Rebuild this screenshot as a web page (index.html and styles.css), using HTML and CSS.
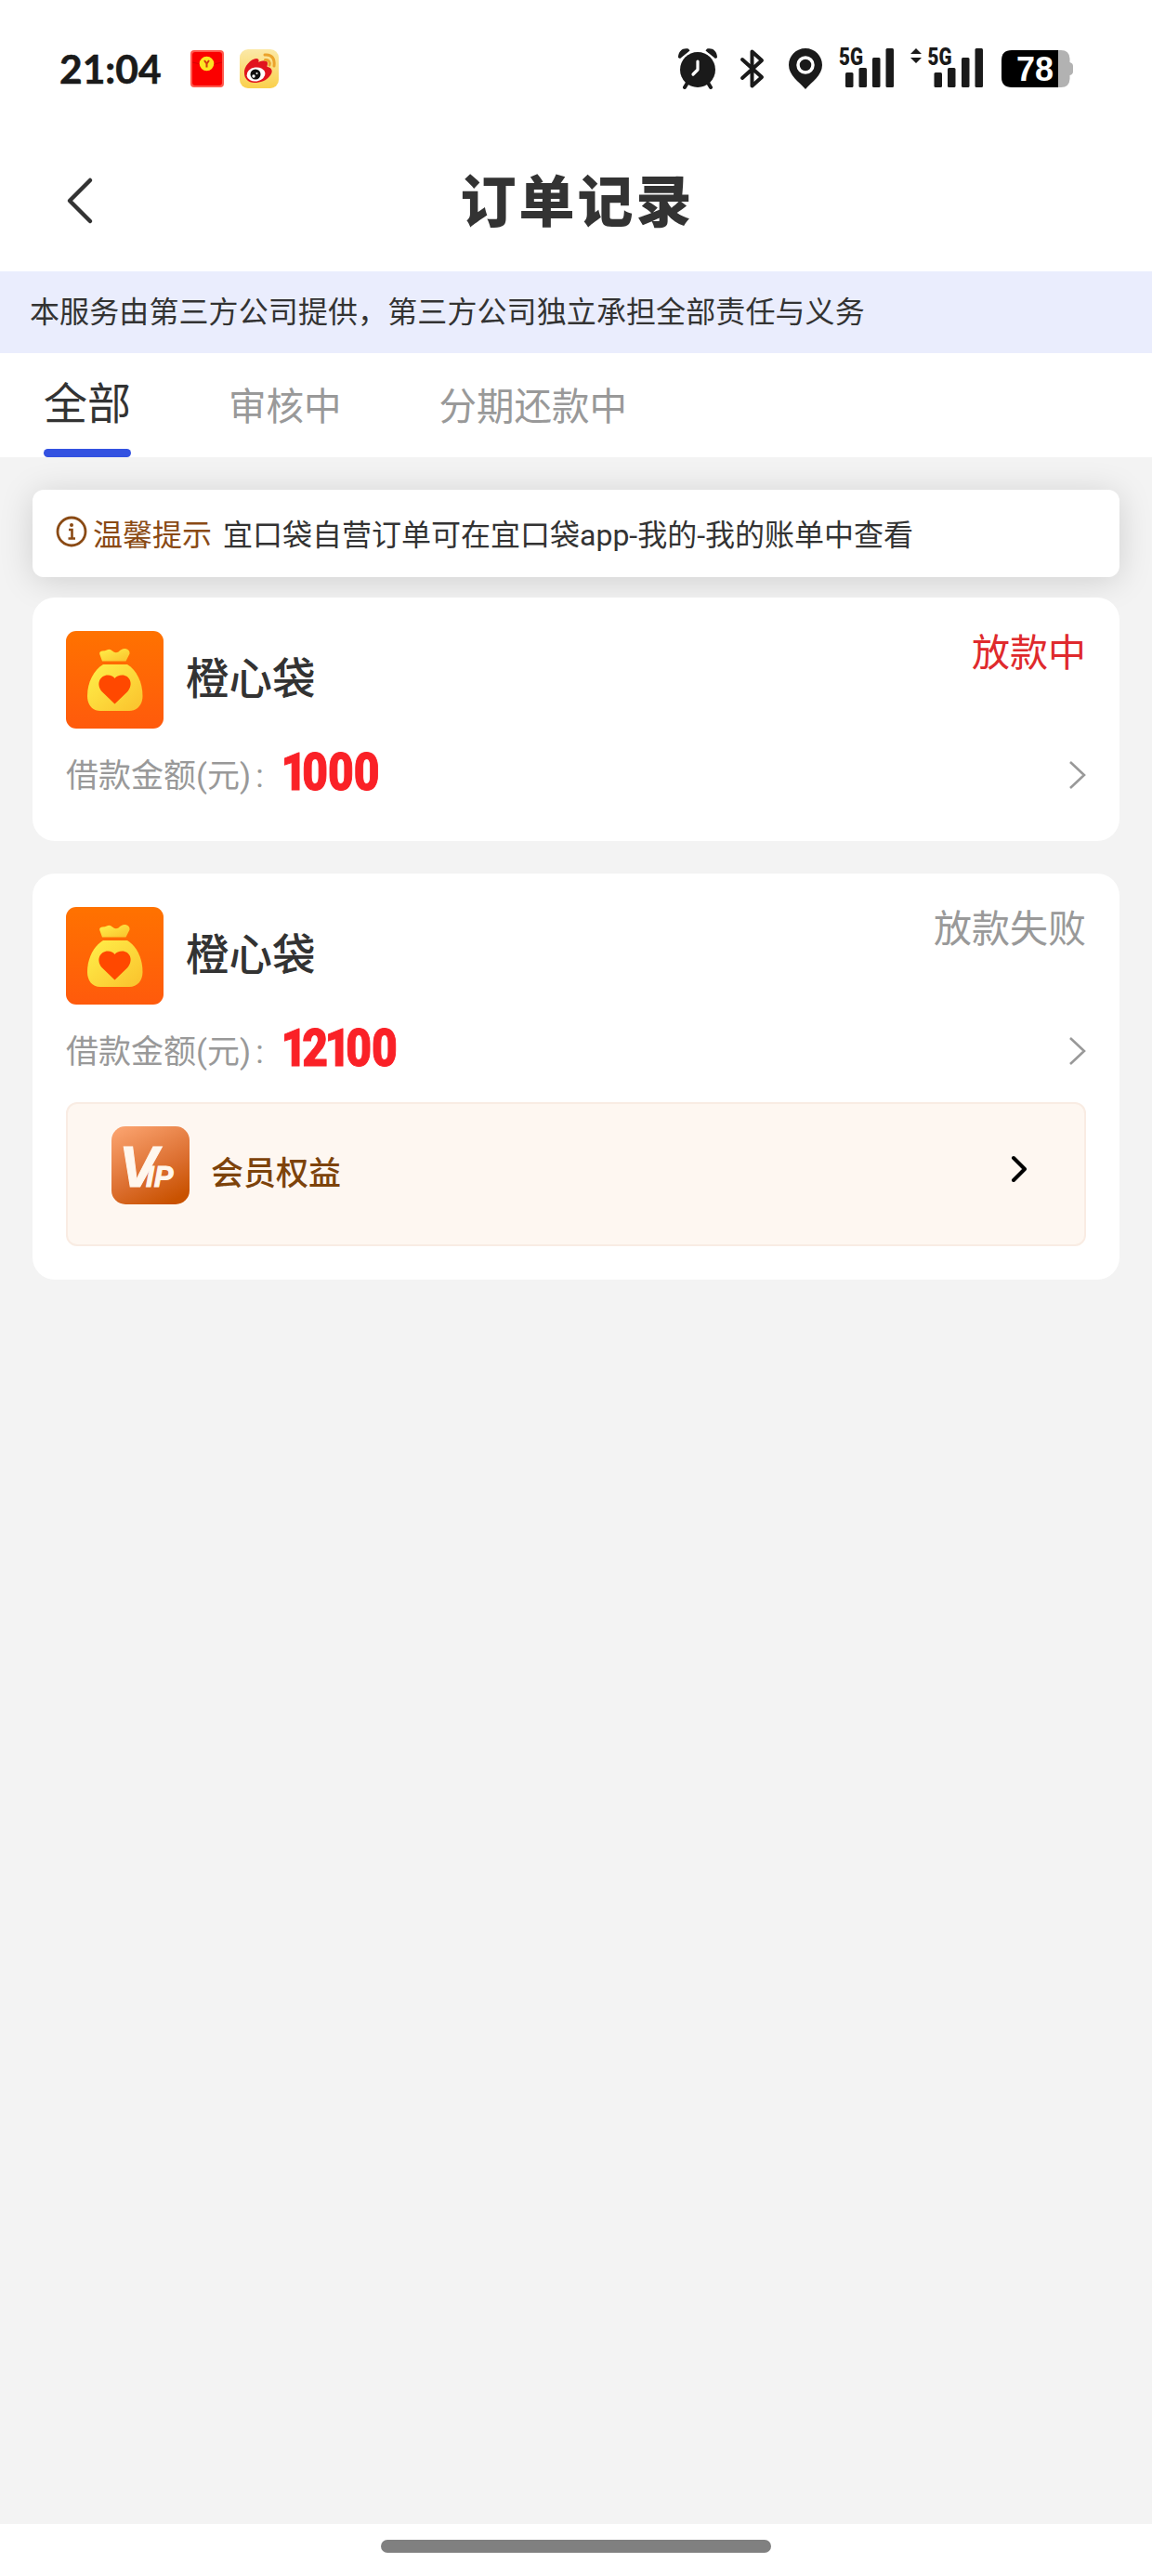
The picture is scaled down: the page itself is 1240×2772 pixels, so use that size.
FILE: index.html
```html
<!DOCTYPE html>
<html lang="zh-CN">
<head>
    <meta charset="UTF-8">
    <meta name="viewport" content="width=device-width, initial-scale=1.0">
    <title>订单记录</title>
    <link rel="stylesheet" href="styles.css">
</head>
<body>
    <!-- 公用图形 -->
    <svg width="0" height="0" class="defs">
        <defs>
            <linearGradient id="bag-bg" x1="0" y1="0" x2="0" y2="1">
                <stop offset="0" stop-color="#ff7200"/>
                <stop offset="1" stop-color="#ff5a0c"/>
            </linearGradient>
            <linearGradient id="bag-body" x1="0" y1="0" x2="1" y2="1">
                <stop offset="0" stop-color="#fff04a"/>
                <stop offset="1" stop-color="#fac12c"/>
            </linearGradient>
            <linearGradient id="vip-bg" x1="0.2" y1="0" x2="0.7" y2="1">
                <stop offset="0" stop-color="#f9a06b"/>
                <stop offset="0.6" stop-color="#dc6f30"/>
                <stop offset="1" stop-color="#c95200"/>
            </linearGradient>
            <linearGradient id="weibo-bg" x1="0" y1="0" x2="0" y2="1">
                <stop offset="0" stop-color="#fbe9a8"/>
                <stop offset="1" stop-color="#fad04c"/>
            </linearGradient>
        </defs>
        <symbol id="bag" viewBox="0 0 105 105">
            <rect width="105" height="105" rx="11" fill="url(#bag-bg)"/>
            <path d="M39 32.500 L36.300 25 Q35.500 22 39 21.500 Q42 21.500 44.500 20.200 Q47.500 18.800 50 21.500 Q53 24.500 56.500 22.500 Q60 18.500 64 19 Q69 20 68.500 24.500 L64.500 32.500 Z" fill="url(#bag-body)"/>
            <path d="M40 36 H66 C76 42 82.500 55 82.500 70 C82.500 79 77 86 68 86 H37 C28 86 23 79 23 70 C23 55 30 42 40 36 Z" fill="url(#bag-body)"/>
            <path d="M52.500 78.500 L39 65.500 C31.500 57 37 47.500 45 47.500 C48.500 47.500 51 49 52.500 51 C54 49 57 47.500 60.500 47.500 C68.500 47.500 73.500 57 66 65.500 Z" fill="#ff4800"/>
        </symbol>
    </svg>

    <div class="status-bar">
        <span class="clock">21:04</span>
        <svg class="app-icon" width="36" height="42" viewBox="0 0 36 42">
            <rect width="36" height="40" y="1" rx="4" fill="#ff5a4e"/>
            <rect x="2" y="3" width="32" height="36" rx="3" fill="#fb0000"/>
            <path d="M2 14 Q18 19 34 14" fill="none" stroke="#d90000"/>
            <circle cx="17.500" cy="15.500" r="7.800" fill="#fde622"/>
            <path d="M15 12 L17.500 15.500 L20 12 M17.500 15.500 V19.500" fill="none" stroke="#d23a10" stroke-width="2"/>
        </svg>
        <svg class="app-icon" width="42" height="42" viewBox="0 0 42 42">
            <rect width="42" height="42" rx="9" fill="url(#weibo-bg)"/>
            <path d="M5 26 C4 19 12 10 18 10 C21 10 21 13 20 14 C24 12 30 11 30 15 C30 18 29 18 30 19 C35 20 36 24 33 28 C29 34 22 36 16 36 C9 36 5 31 5 26 Z" fill="#e1131e"/>
            <ellipse cx="17.500" cy="27" rx="10" ry="7.500" fill="#fff" transform="rotate(-8 17.500 27)"/>
            <circle cx="17" cy="27" r="5.500" fill="#111"/>
            <circle cx="15" cy="29" r="1.700" fill="#fff"/>
            <circle cx="18.500" cy="26" r="1" fill="#fff"/>
            <path d="M27 6 C35 5 38 11 37 18 M27.500 11.500 C31 11 33 14 32 17" fill="none" stroke="#eba32c" stroke-width="3" stroke-linecap="round"/>
        </svg>

        <div class="system-icons">
            <svg width="44" height="46" viewBox="0 0 44 46">
                <g fill="#1a1a1a">
                    <circle cx="22" cy="24" r="19"/>
                    <path d="M1 11 C1 3 7 0 12 1.500 L13.500 3.500 L3 12 Z M43 11 C43 3 37 0 32 1.500 L30.500 3.500 L41 12 Z"/>
                </g>
                <path d="M11 38 L8 43 M33 38 L36 43" stroke="#1a1a1a" stroke-width="4" stroke-linecap="round"/>
                <path d="M22 15 V24 L17 29" fill="none" stroke="#fff" stroke-width="3.200" stroke-linecap="round" stroke-linejoin="round"/>
            </svg>
            <svg class="bluetooth" width="26" height="46" viewBox="0 0 26 46">
                <path d="M2 13 L23 32 L12.500 41.500 V4.500 L23 14 L2 33" fill="none" stroke="#1a1a1a" stroke-width="4" stroke-linecap="round" stroke-linejoin="round"/>
            </svg>
            <svg class="pin" width="38" height="46" viewBox="0 0 38 46">
                <path d="M19 1 C29 1 37 9 37 19 C37 30 26 37 19 45 C12 37 1 30 1 19 C1 9 9 1 19 1 Z" fill="#1a1a1a"/>
                <circle cx="19" cy="19" r="8" fill="none" stroke="#fff" stroke-width="3.500"/>
            </svg>
            <svg class="signal" width="60" height="46" viewBox="0 0 60 46">
                <text x="0" y="18.500" textLength="26" lengthAdjust="spacingAndGlyphs" class="net">5G</text>
                <g fill="#1a1a1a">
                    <rect x="7" y="27" width="8.500" height="16" rx="1.500"/>
                    <rect x="21.500" y="22" width="8.500" height="21" rx="1.500"/>
                    <rect x="36" y="11" width="8.500" height="32" rx="1.500"/>
                    <rect x="50.500" y="1" width="8.500" height="42" rx="1.500"/>
                </g>
            </svg>
            <svg class="signal-two" width="79" height="46" viewBox="0 0 79 46">
                <path d="M0 7 L6 1 L12 7 Z M0 11 H12 L6 17 Z" fill="#1a1a1a"/>
                <text x="18.500" y="18.500" textLength="26" lengthAdjust="spacingAndGlyphs" class="net">5G</text>
                <g fill="#1a1a1a">
                    <rect x="25.500" y="27" width="8.500" height="16" rx="1.500"/>
                    <rect x="40" y="22" width="8.500" height="21" rx="1.500"/>
                    <rect x="55" y="11" width="8.500" height="32" rx="1.500"/>
                    <rect x="69.500" y="1" width="8.500" height="42" rx="1.500"/>
                </g>
            </svg>
            <svg class="battery" width="78" height="46" viewBox="0 0 78 46">
                <path d="M61 3 H64 Q73 3 73.500 12 V16 Q77 17 77 20 V26 Q77 29 73.500 30 V34 Q73 43 64 43 H61 Z" fill="#b2b2b2"/>
                <path d="M61 3 H11 Q0 3 0 14 V32 Q0 43 11 43 H61 Z" fill="#000"/>
                <text x="16" y="36" textLength="40" lengthAdjust="spacingAndGlyphs" class="level">78</text>
            </svg>
        </div>
    </div>

    <div class="header">
        <svg class="back" width="32" height="52" viewBox="0 0 32 52">
            <path d="M27 4 L5 26 L27 48" fill="none" stroke="#333" stroke-width="4.500" stroke-linecap="round" stroke-linejoin="round"/>
        </svg>
        <h1>订单记录</h1>
    </div>

    <div class="notice">本服务由第三方公司提供，第三方公司独立承担全部责任与义务</div>

    <div class="tabs">
        <div class="tab active">全部</div>
        <div class="tab">审核中</div>
        <div class="tab">分期还款中</div>
    </div>

    <div class="content">
        <div class="tip">
            <svg width="34" height="34" viewBox="0 0 34 34">
                <circle cx="17" cy="16" r="15" fill="none" stroke="#8a4a14" stroke-width="2.800"/>
                <circle cx="17" cy="9" r="2" fill="#8a4a14"/>
                <path d="M14 14 H17.500 V23.500 M13.500 23.500 H21" fill="none" stroke="#8a4a14" stroke-width="2.600"/>
            </svg>
            <span class="tip-label">温馨提示</span>
            <span class="tip-text">宜口袋自营订单可在宜口袋app-我的-我的账单中查看</span>
        </div>

        <div class="order-card">
            <div class="order-top">
                <svg class="logo" width="105" height="105"><use href="#bag"/></svg>
                <span class="order-name">橙心袋</span>
                <span class="order-status pending">放款中</span>
            </div>
            <div class="order-amount">
                <span class="amount-label">借款金额(元)<i>:</i></span>
                <span class="amount"><b>1</b>000</span>
                <svg class="arrow" width="18" height="32" viewBox="0 0 18 32">
                    <path d="M1 2 L16 16 L1 30" fill="none" stroke="#999" stroke-width="2.600"/>
                </svg>
            </div>
        </div>

        <div class="order-card">
            <div class="order-top">
                <svg class="logo" width="105" height="105"><use href="#bag"/></svg>
                <span class="order-name">橙心袋</span>
                <span class="order-status">放款失败</span>
            </div>
            <div class="order-amount">
                <span class="amount-label">借款金额(元)<i>:</i></span>
                <span class="amount"><b>1</b>2<b>1</b>00</span>
                <svg class="arrow" width="18" height="32" viewBox="0 0 18 32">
                    <path d="M1 2 L16 16 L1 30" fill="none" stroke="#999" stroke-width="2.600"/>
                </svg>
            </div>
            <div class="vip">
                <svg width="84" height="84" viewBox="0 0 84 84">
                    <rect width="84" height="84" rx="15" fill="url(#vip-bg)"/>
                    <text x="8" y="64.500" class="vip-mark">V<tspan dx="-13" class="vip-small">IP</tspan></text>
                </svg>
                <span class="vip-label">会员权益</span>
                <svg class="vip-arrow" width="20" height="32" viewBox="0 0 20 32">
                    <path d="M4 4 L16 16 L4 28" fill="none" stroke="#000" stroke-width="4" stroke-linecap="round" stroke-linejoin="round"/>
                </svg>
            </div>
        </div>
    </div>

    <div class="nav-bar">
        <div class="nav-handle"></div>
    </div>
</body>
</html>
```

FILE: styles.css
```css
* {
    box-sizing: border-box;
}
body {
    display: flex;
    flex-direction: column;
    margin: 0;
    height: 2772px;
    font-family: Roboto, "Noto Sans CJK SC", sans-serif;
    background-color: #fff;
    color: #333;
}
svg {
    display: block;
    flex-shrink: 0;
    overflow: visible;
}
.defs {
    position: absolute;
}

/* 状态栏 */
.status-bar {
    display: flex;
    align-items: center;
    height: 148px;
    padding: 0 84px 0 64px;
}
.clock {
    width: 141px;
    font-family: Lato, sans-serif;
    font-size: 42.500px;
    font-weight: 700;
    line-height: 50px;
    color: #1a1a1a;
    -webkit-text-stroke: 0.6px #1a1a1a;
}
.app-icon {
    margin-right: 17px;
}
.system-icons {
    display: flex;
    margin-left: auto;
}
.bluetooth {
    margin-left: 24px;
}
.pin {
    margin-left: 25px;
}
.signal {
    margin-left: 17px;
}
.signal-two {
    margin-left: 17px;
}
.battery {
    margin-left: 19px;
}
.net {
    font-family: Roboto, sans-serif;
    font-size: 25px;
    font-weight: 900;
    fill: #1a1a1a;
}
.level {
    font-family: "Liberation Sans", sans-serif;
    font-size: 37px;
    font-weight: 700;
    fill: #fff;
}

/* 标题 */
.header {
    display: grid;
    grid-template-columns: 110px 1fr 110px;
    align-items: center;
    height: 144px;
    padding-bottom: 8px;
}
.back {
    margin-left: 70px;
}
.header h1 {
    margin: 0;
    padding-top: 5px;
    font-size: 60px;
    font-weight: 900;
    line-height: 86px;
    letter-spacing: 3px;
    text-indent: 3px;
    text-align: center;
}
.notice {
    height: 88px;
    padding-left: 32px;
    background-color: #eaedfd;
    font-size: 32px;
    line-height: 89px;
    letter-spacing: 0.1px;
}
.tabs {
    display: flex;
    gap: 105px;
    height: 112px;
    padding-left: 47px;
}
.tab {
    font-size: 40.500px;
    line-height: 116px;
    color: #999;
}
.tab.active {
    display: flex;
    flex-direction: column;
    justify-content: space-between;
    font-size: 47px;
    line-height: 103px;
    padding-top: 3px;
    height: 112px;
    color: #333;
}
.tab.active::after {
    content: "";
    flex: none;
    height: 9px;
    margin-top: -3px;
    border-radius: 5px;
    background-color: #3352e1;
}

/* 订单列表 */
.content {
    flex: 1;
    padding: 35px 35px 0;
    background-color: #f3f3f3;
}
.tip {
    display: flex;
    align-items: center;
    height: 94px;
    margin-bottom: 22px;
    padding-left: 25px;
    padding-bottom: 2px;
    border-radius: 12px;
    background-color: #fff;
    box-shadow: 0 4px 36px rgba(0, 0, 0, 0.15);
    font-size: 32px;
}
.tip-label {
    margin-left: 6px;
    color: #8a4a14;
}
.tip-text {
    margin-left: 12px;
}
.order-card {
    position: relative;
    margin-bottom: 35px;
    padding: 36px;
    border-radius: 24px;
    background-color: #fff;
}
.order-top {
    display: flex;
    height: 105px;
}
.order-name {
    margin-left: 24px;
    font-size: 46.500px;
    font-weight: 500;
    line-height: 105px;
}
.order-status {
    margin-left: auto;
    font-size: 41px;
    line-height: 48px;
    color: #999;
}
.order-status.pending {
    color: #df2a2d;
}
.order-amount {
    display: flex;
    align-items: center;
    height: 85px;
    padding-top: 14px;
}
.amount-label {
    width: 235px;
    padding-bottom: 4px;
    font-size: 35px;
    color: #999;
}
.amount-label i {
    margin-left: 5px;
    font-style: normal;
}
.amount {
    margin-top: -6px;
    transform: scaleX(0.855);
    transform-origin: left center;
    font-size: 56px;
    font-weight: 900;
    line-height: 60px;
    color: #fa2127;
    -webkit-text-stroke: 1px #fa2127;
}
.amount b {
    margin-left: -4px;
    margin-right: -6px;
    font-weight: 900;
}
.arrow {
    margin-left: auto;
}
.vip {
    display: flex;
    height: 155px;
    margin-top: 20px;
    padding: 24px 60px 0 47px;
    border: 2px solid #f9ece3;
    border-radius: 12px;
    background-color: #fef7f1;
}
.vip-label {
    margin-left: 23px;
    font-size: 35px;
    font-weight: 500;
    line-height: 103px;
    color: #7d430b;
}
.vip-arrow {
    margin: 30px 0 0 auto;
}
.vip-mark {
    font-family: "Liberation Sans", sans-serif;
    font-size: 63px;
    font-style: italic;
    font-weight: 700;
    fill: #fff7ee;
    stroke: #fff7ee;
}
.vip-small {
    font-size: 31px;
}

/* 底部手势条 */
.nav-bar {
    height: 56px;
    padding-top: 17px;
    background-color: #fff;
}
.nav-handle {
    width: 420px;
    height: 14px;
    margin: 0 auto;
    border-radius: 7px;
    background-color: #808080;
}
```
